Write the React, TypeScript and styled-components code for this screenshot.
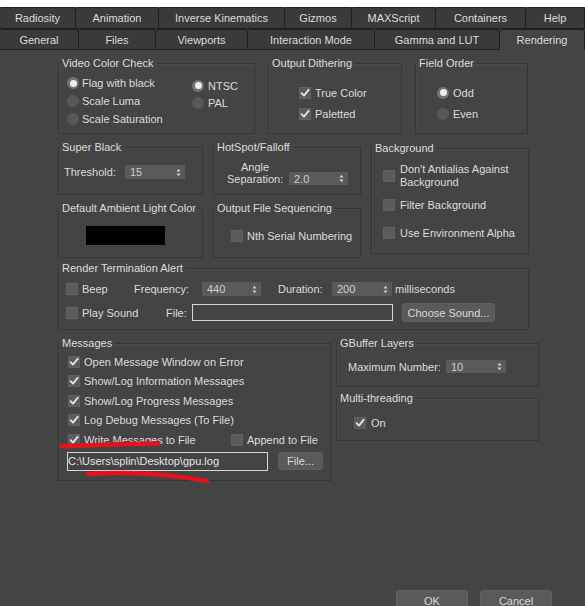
import React from "react";
import styled, { createGlobalStyle } from "styled-components";

const GlobalStyle = createGlobalStyle`
  html, body { margin: 0; padding: 0; background: #ffffff; }
  body {
    font-family: "Liberation Sans", Arial, sans-serif;
    font-size: 11px;
    color: #dcdcdc;
  }
  #root { width: 585px; height: 606px; overflow: hidden; }
`;

const Window = styled.div`
  position: relative;
  margin-top: 7px;
  width: 585px;
  height: 599px;
  background: #444444;
  overflow: hidden;
  display: flex;
  flex-direction: column;
`;

const TabRow = styled.div<{ $h: number }>`
  display: flex;
  height: ${(p) => p.$h}px;
  flex: none;
`;

const Tab = styled.div<{ $w?: number; $active?: boolean }>`
  flex: ${(p) => (p.$w ? `0 0 ${p.$w}px` : "1 1 auto")};
  box-sizing: border-box;
  display: flex;
  align-items: center;
  justify-content: center;
  background: ${(p) => (p.$active ? "#444444" : "#3a3a3a")};
  border-top: 1px solid #202020;
  border-right: 1px solid #202020;
  border-bottom: 1px solid ${(p) => (p.$active ? "#444444" : "#202020")};
  border-radius: 3px 3px 0 0;
  color: #dcdcdc;
  font-size: 11px;
  white-space: nowrap;
`;

const Content = styled.div`
  padding: 6px 0 0 58px;
  display: flex;
  flex-direction: column;
`;

const RowA = styled.div`
  display: flex;
  gap: 13px;
`;

const RowB = styled.div`
  margin-top: 6px;
  display: grid;
  grid-template-columns: 145px 148px 158px;
  grid-template-rows: 55px 57px;
  column-gap: 10px;
  row-gap: 6px;
`;

const RowD = styled.div`
  margin-top: 6px;
  display: flex;
  gap: 5px;
  align-items: flex-start;
`;

const RightCol = styled.div`
  display: flex;
  flex-direction: column;
  gap: 4px;
`;

const Group = styled.fieldset<{ $w?: number; $h: number; $side?: boolean; $mt?: number }>`
  box-sizing: border-box;
  margin: ${(p) => p.$mt ?? 0}px 0 0 0;
  padding: 0;
  min-width: 0;
  width: ${(p) => (p.$w ? `${p.$w}px` : "auto")};
  height: ${(p) => p.$h}px;
  border: 1px solid #363636;
  box-shadow: inset 1px 1px 0 #4b4b4b;
  ${(p) => (p.$side ? "grid-column: 3; grid-row: 1 / span 2; align-self: start;" : "")}
`;

const Legend = styled.legend`
  margin-left: 0;
  padding: 0 3px;
  line-height: 14px;
  font-size: 11px;
  color: #dcdcdc;
`;

const Body = styled.div<{ $pt: number; $pl: number; $dir?: "row" | "column"; $align?: string }>`
  display: flex;
  flex-direction: ${(p) => p.$dir ?? "column"};
  align-items: ${(p) => p.$align ?? "flex-start"};
  padding: ${(p) => p.$pt}px 0 0 ${(p) => p.$pl}px;
`;

const Column = styled.div<{ $w?: number; $mt?: number }>`
  display: flex;
  flex-direction: column;
  width: ${(p) => (p.$w ? `${p.$w}px` : "auto")};
  margin-top: ${(p) => p.$mt ?? 0}px;
`;

const OptionRow = styled.div<{ $h: number; $mt?: number; $gap?: number }>`
  display: flex;
  align-items: center;
  gap: ${(p) => p.$gap ?? 4}px;
  height: ${(p) => p.$h}px;
  margin-top: ${(p) => p.$mt ?? 0}px;
  white-space: nowrap;
`;

const Cell = styled.div<{ $w: number; $ml?: number }>`
  flex: 0 0 ${(p) => p.$w}px;
  margin-left: ${(p) => p.$ml ?? 0}px;
  display: flex;
  align-items: center;
  gap: 4px;
  white-space: nowrap;
`;

const BoxEl = styled.span`
  flex: none;
  width: 12px;
  height: 12px;
  box-sizing: border-box;
  background: #5b5b5b;
  border: 1px solid #626262;
  display: inline-flex;
  align-items: center;
  justify-content: center;
`;

const RadioEl = styled.span<{ $on?: boolean }>`
  flex: none;
  width: 12px;
  height: 12px;
  border-radius: 50%;
  background: ${(p) => (p.$on ? "#737373" : "#585858")};
  display: inline-flex;
  align-items: center;
  justify-content: center;
  &::after {
    content: "";
    display: ${(p) => (p.$on ? "block" : "none")};
    width: 7px;
    height: 7px;
    border-radius: 50%;
    background: #ececec;
  }
`;

const TwoLine = styled.div<{ $lh: number; $center?: boolean; $w?: number }>`
  line-height: ${(p) => p.$lh}px;
  text-align: ${(p) => (p.$center ? "center" : "left")};
  width: ${(p) => (p.$w ? `${p.$w}px` : "auto")};
  flex: none;
`;

const SpinnerBox = styled.div<{ $w: number; $h: number; $ml?: number }>`
  flex: none;
  box-sizing: border-box;
  width: ${(p) => p.$w}px;
  height: ${(p) => p.$h}px;
  margin-left: ${(p) => p.$ml ?? 0}px;
  background: #5a5a5a;
  color: #cfcfcf;
  display: flex;
  align-items: center;
  justify-content: space-between;
  padding: 0 4px 0 5px;
  font-size: 11px;
`;

const Swatch = styled.div`
  width: 79px;
  height: 19px;
  background: #000000;
`;

const TextField = styled.div<{ $w: number; $h: number }>`
  flex: none;
  box-sizing: border-box;
  width: ${(p) => p.$w}px;
  height: ${(p) => p.$h}px;
  border: 1px solid #d6d6d6;
  background: #444444;
  color: #e4e4e4;
  font-size: 11px;
  display: flex;
  align-items: center;
  padding-left: 0;
  white-space: nowrap;
`;

const Button = styled.div<{ $w: number; $h: number; $ml?: number }>`
  flex: none;
  box-sizing: border-box;
  width: ${(p) => p.$w}px;
  height: ${(p) => p.$h}px;
  margin-left: ${(p) => p.$ml ?? 0}px;
  background: #5a5a5a;
  border: 1px solid #606060;
  border-radius: 3px;
  color: #dadada;
  display: flex;
  align-items: center;
  justify-content: center;
  font-size: 11px;
  white-space: nowrap;
`;

const PathRow = styled.div`
  display: flex;
  align-items: center;
  margin: 2px 0 0 -1px;
`;

const Footer = styled.div`
  margin-top: 109px;
  display: flex;
  justify-content: flex-end;
  gap: 12px;
  padding-right: 33px;
`;

const Overlay = styled.svg`
  position: absolute;
  left: 0;
  top: 0;
  width: 585px;
  height: 599px;
  pointer-events: none;
`;

const Check = ({ on }: { on?: boolean }) => (
  <BoxEl>
    {on && (
      <svg width="10" height="10" viewBox="0 0 10 10">
        <path d="M1.6 5.2 L4 7.6 L8.6 1.8" fill="none" stroke="#e2e2e2" strokeWidth="1.9" strokeLinecap="round" strokeLinejoin="round" />
      </svg>
    )}
  </BoxEl>
);

const Arrows = () => (
  <svg width="5" height="9" viewBox="0 0 5 9">
    <path d="M0.5 3.5 L2.5 0.8 L4.5 3.5 Z M0.5 5.5 L2.5 8.2 L4.5 5.5 Z" fill="#cfcfcf" />
  </svg>
);

const Spinner = ({ value, w, h, ml }: { value: string; w: number; h: number; ml?: number }) => (
  <SpinnerBox $w={w} $h={h} $ml={ml}>
    <span>{value}</span>
    <Arrows />
  </SpinnerBox>
);

const tabs1: [string, number?][] = [
  ["Radiosity", 76],
  ["Animation", 83],
  ["Inverse Kinematics", 126],
  ["Gizmos", 67],
  ["MAXScript", 84],
  ["Containers", 90],
  ["Help"],
];

const tabs2: [string, number?][] = [
  ["General", 79],
  ["Files", 77],
  ["Viewports", 92],
  ["Interaction Mode", 127],
  ["Gamma and LUT", 125],
  ["Rendering"],
];

export default function App() {
  return (
    <>
      <GlobalStyle />
      <Window>
        <TabRow $h={22}>
          {tabs1.map(([t, w]) => (
            <Tab key={t} $w={w}>{t}</Tab>
          ))}
        </TabRow>
        <TabRow $h={21}>
          {tabs2.map(([t, w]) => (
            <Tab key={t} $w={w} $active={t === "Rendering"}>{t}</Tab>
          ))}
        </TabRow>

        <Content>
          <RowA>
            <Group $w={197} $h={78}>
              <Legend>Video Color Check</Legend>
              <Body $pt={4} $pl={8} $dir="row">
                <Column $w={125}>
                  <OptionRow $h={18} $gap={3}><RadioEl $on />Flag with black</OptionRow>
                  <OptionRow $h={18} $gap={3}><RadioEl />Scale Luma</OptionRow>
                  <OptionRow $h={18} $gap={3}><RadioEl />Scale Saturation</OptionRow>
                </Column>
                <Column $mt={3}>
                  <OptionRow $h={17} $gap={4}><RadioEl $on />NTSC</OptionRow>
                  <OptionRow $h={17} $gap={4}><RadioEl />PAL</OptionRow>
                </Column>
              </Body>
            </Group>
            <Group $w={134} $h={78}>
              <Legend>Output Dithering</Legend>
              <Body $pt={12} $pl={30}>
                <OptionRow $h={21}><Check on />True Color</OptionRow>
                <OptionRow $h={21}><Check on />Paletted</OptionRow>
              </Body>
            </Group>
            <Group $w={113} $h={78}>
              <Legend>Field Order</Legend>
              <Body $pt={12} $pl={21}>
                <OptionRow $h={21} $gap={4}><RadioEl $on />Odd</OptionRow>
                <OptionRow $h={21} $gap={4}><RadioEl />Even</OptionRow>
              </Body>
            </Group>
          </RowA>

          <RowB>
            <Group $h={55}>
              <Legend>Super Black</Legend>
              <Body $pt={11} $pl={5} $dir="row" $align="center">
                <Cell $w={61}>Threshold:</Cell>
                <Spinner value="15" w={60} h={14} />
              </Body>
            </Group>
            <Group $h={55}>
              <Legend>HotSpot/Falloff</Legend>
              <Body $pt={7} $pl={13} $dir="row" $align="flex-end">
                <TwoLine $lh={12} $center $w={56}>Angle<br />Separation:</TwoLine>
                <Spinner value="2.0" w={59} h={13} ml={6} />
              </Body>
            </Group>
            <Group $h={113} $side $mt={1}>
              <Legend>Background</Legend>
              <Body $pt={8} $pl={11}>
                <OptionRow $h={26} $gap={5}>
                  <Check />
                  <TwoLine $lh={13}>Don't Antialias Against<br />Background</TwoLine>
                </OptionRow>
                <OptionRow $h={14} $mt={9} $gap={5}><Check />Filter Background</OptionRow>
                <OptionRow $h={14} $mt={14} $gap={5}><Check />Use Environment Alpha</OptionRow>
              </Body>
            </Group>
            <Group $h={57}>
              <Legend>Default Ambient Light Color</Legend>
              <Body $pt={11} $pl={27}>
                <Swatch />
              </Body>
            </Group>
            <Group $h={57}>
              <Legend>Output File Sequencing</Legend>
              <Body $pt={14} $pl={17}>
                <OptionRow $h={14}><Check />Nth Serial Numbering</OptionRow>
              </Body>
            </Group>
          </RowB>

          <Group $w={471} $h={69} $mt={3}>
            <Legend>Render Termination Alert</Legend>
            <Body $pt={7} $pl={7}>
              <OptionRow $h={14} $gap={0}>
                <Cell $w={68}><Check />Beep</Cell>
                <Cell $w={68}>Frequency:</Cell>
                <Spinner value="440" w={59} h={14} />
                <Cell $w={54} $ml={17}>Duration:</Cell>
                <Spinner value="200" w={60} h={14} />
                <Cell $w={70} $ml={3}>milliseconds</Cell>
              </OptionRow>
              <OptionRow $h={19} $mt={7} $gap={0}>
                <Cell $w={100}><Check />Play Sound</Cell>
                <Cell $w={26}>File:</Cell>
                <TextField $w={201} $h={17} />
                <Button $w={93} $h={19} $ml={9}>Choose Sound...</Button>
              </OptionRow>
            </Body>
          </Group>

          <RowD>
            <Group $w={273} $h={145}>
              <Legend>Messages</Legend>
              <Body $pt={2} $pl={9}>
                <OptionRow $h={19.5}><Check on />Open Message Window on Error</OptionRow>
                <OptionRow $h={19.5}><Check on />Show/Log Information Messages</OptionRow>
                <OptionRow $h={19.5}><Check on />Show/Log Progress Messages</OptionRow>
                <OptionRow $h={19.5}><Check on />Log Debug Messages (To File)</OptionRow>
                <OptionRow $h={19.5} $gap={0}>
                  <Cell $w={163}><Check on />Write Messages to File</Cell>
                  <Cell $w={90}><Check />Append to File</Cell>
                </OptionRow>
                <PathRow>
                  <TextField $w={201} $h={19}>C:\Users\splin\Desktop\gpu.log</TextField>
                  <Button $w={45} $h={18} $ml={10}>File...</Button>
                </PathRow>
              </Body>
            </Group>
            <RightCol>
              <Group $w={203} $h={51}>
                <Legend>GBuffer Layers</Legend>
                <Body $pt={10} $pl={11} $dir="row" $align="center">
                  <Cell $w={98}>Maximum Number:</Cell>
                  <Spinner value="10" w={60} h={13} />
                </Body>
              </Group>
              <Group $w={203} $h={50}>
                <Legend>Multi-threading</Legend>
                <Body $pt={11} $pl={17}>
                  <OptionRow $h={14} $gap={5}><Check on />On</OptionRow>
                </Body>
              </Group>
            </RightCol>
          </RowD>

          <Footer>
            <Button $w={72} $h={22}>OK</Button>
            <Button $w={72} $h={22}>Cancel</Button>
          </Footer>
        </Content>

        <Overlay viewBox="0 0 585 599">
          <path d="M62 439.5 Q 110 437 158 436.5" fill="none" stroke="#e3121c" strokeWidth="4.5" strokeLinecap="round" />
          <path d="M88 467 Q 150 463 207 474" fill="none" stroke="#e3121c" strokeWidth="4.5" strokeLinecap="round" />
        </Overlay>
      </Window>
    </>
  );
}
